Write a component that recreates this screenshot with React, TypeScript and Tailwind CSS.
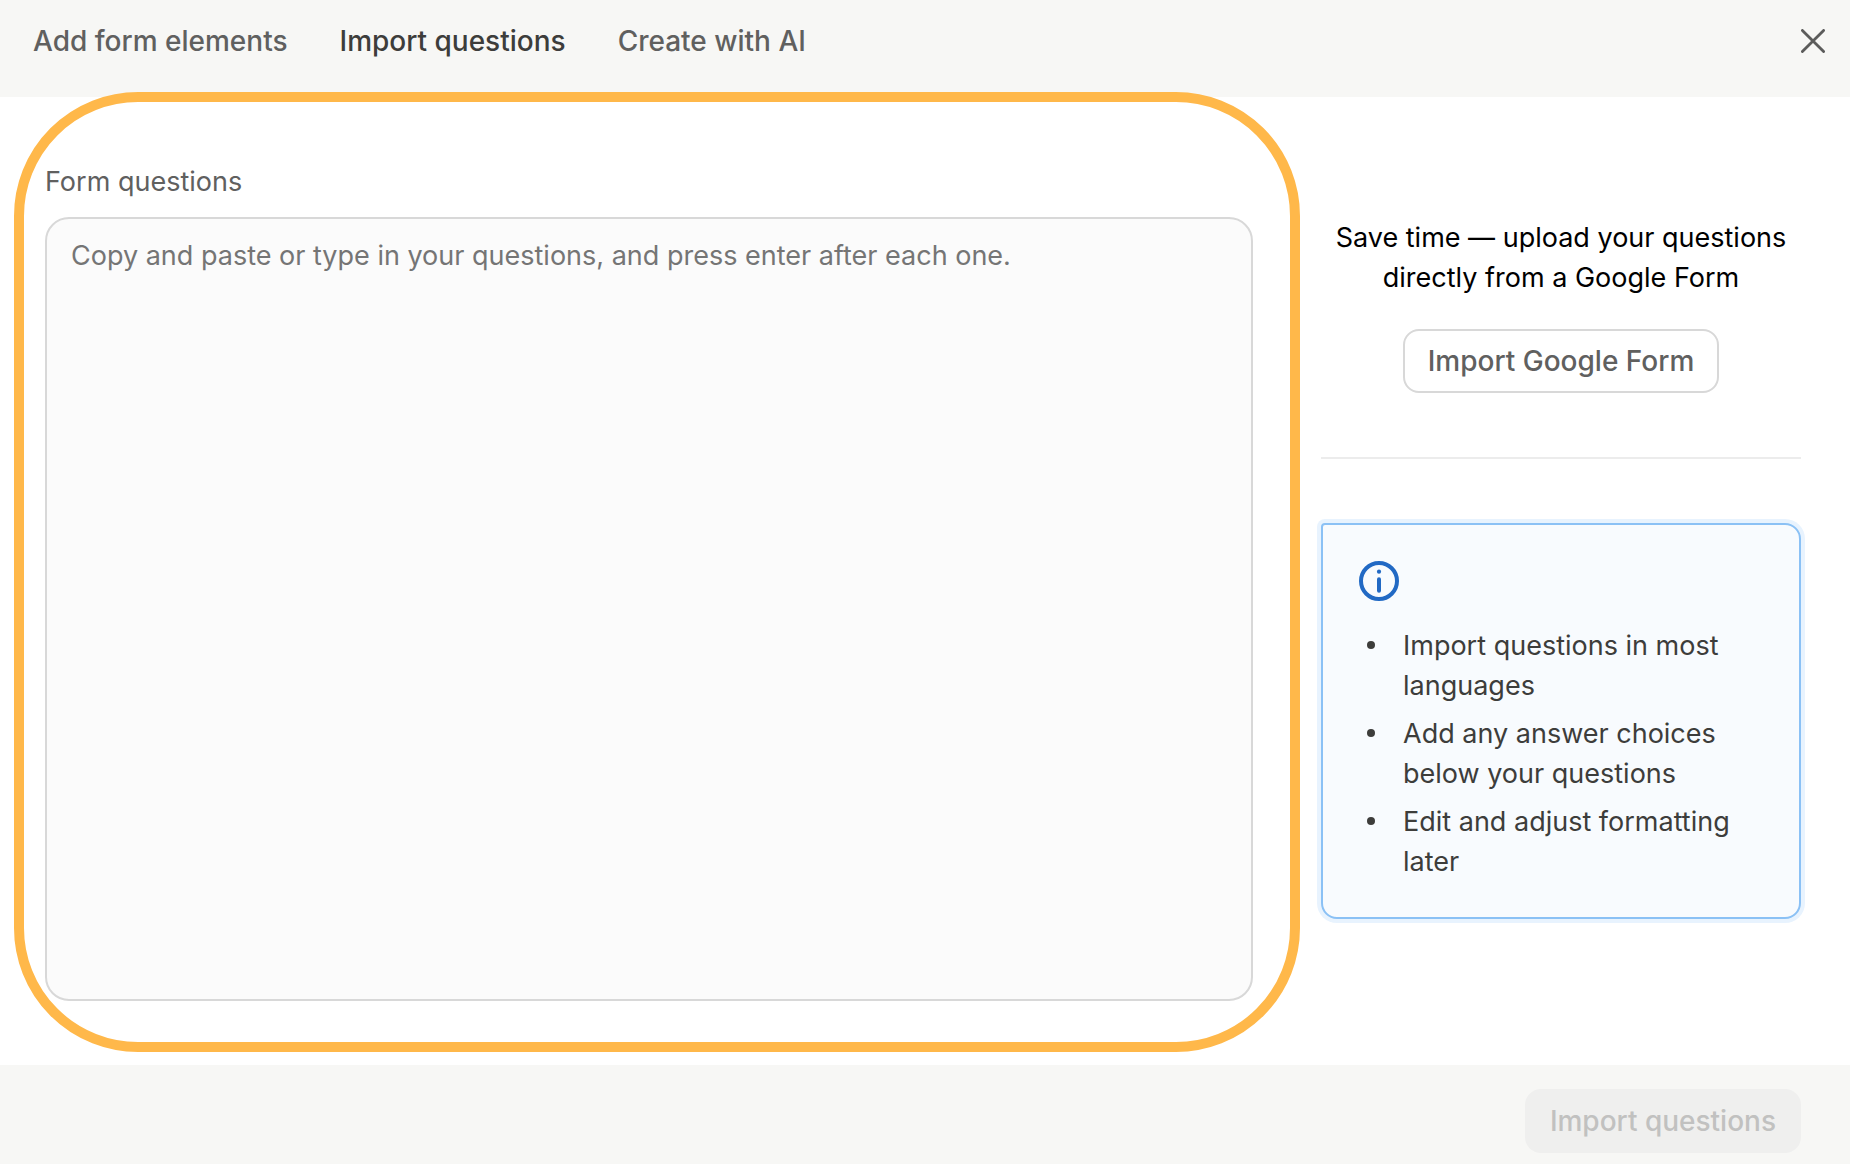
import { useState } from "react";

const tabs = ["Add form elements", "Import questions", "Create with AI"];

const tips = [
  "Import questions in most languages",
  "Add any answer choices below your questions",
  "Edit and adjust formatting later",
];

function CloseIcon() {
  return (
    <svg viewBox="0 0 24 24" className="size-6" fill="none" stroke="currentColor" strokeWidth="2.8" strokeLinecap="round" aria-hidden="true">
      <path d="M1.4 1.4 22.6 22.6M22.6 1.4 1.4 22.6" />
    </svg>
  );
}

function InfoIcon() {
  return (
    <svg viewBox="0 0 40 40" className="size-10 text-[#2169c4]" fill="none" aria-hidden="true">
      <circle cx="20" cy="20" r="18" stroke="currentColor" strokeWidth="4" />
      <circle cx="20" cy="10.7" r="2.1" fill="currentColor" />
      <path d="M20 18.2v11.6" stroke="currentColor" strokeWidth="4" strokeLinecap="round" />
    </svg>
  );
}

function Header({ active, onSelect }: { active: string; onSelect: (tab: string) => void }) {
  return (
    <header className="flex items-start justify-between bg-[#f7f7f5] pt-[21px] pr-[25px] pb-9 pl-[33px]">
      <nav className="flex gap-[52px] text-[28px] leading-10 font-medium">
        {tabs.map((tab) => (
          <button
            key={tab}
            type="button"
            aria-current={tab === active ? "page" : undefined}
            onClick={() => onSelect(tab)}
            className={tab === active ? "text-[#3d3d3b]" : "text-[#60605f]"}
          >
            {tab}
          </button>
        ))}
      </nav>
      <button type="button" aria-label="Close" className="flex h-10 items-center text-[#5c5c5b]">
        <CloseIcon />
      </button>
    </header>
  );
}

function QuestionsField() {
  return (
    <section className="relative flex min-w-0 flex-1 flex-col pt-[65px] pb-16">
      <div className="pointer-events-none absolute -top-[5px] -right-[47px] bottom-[13px] -left-[31px] rounded-[124px] border-[10px] border-[#ffb84a]" />
      <label htmlFor="questions" className="mb-[15px] text-[#60605f]">
        Form questions
      </label>
      <textarea
        id="questions"
        placeholder="Copy and paste or type in your questions, and press enter after each one."
        className="block w-full flex-1 resize-none rounded-3xl border-2 border-[#d8d8d8] bg-[#fbfbfb] px-6 py-[17px] text-[#3d3d3b] outline-none placeholder:text-[#757575] placeholder:opacity-100"
      />
    </section>
  );
}

function Sidebar() {
  return (
    <aside className="w-[480px] shrink-0 pt-[121px]">
      <div className="flex flex-col items-center border-b-2 border-[#ececec] pb-16 text-center">
        <p className="text-black">Save time — upload your questions directly from a Google Form</p>
        <button type="button" className="mt-[31px] h-16 rounded-2xl border-2 border-[#d8d8d8] px-[23px] text-[28px] leading-10 font-medium text-[#60605f]">
          Import Google Form
        </button>
      </div>
      <div className="mt-16 rounded-2xl rounded-tl-sm border-2 border-[#8bc1f5] bg-[#f8fbfe] px-9 pt-9 pb-[35px] ring-4 ring-[#e8f3fe]">
        <InfoIcon />
        <ul className="mt-[25px] flex flex-col gap-2 text-[#3d3d3b]">
          {tips.map((tip) => (
            <li key={tip} className="flex">
              <span className="mt-[15px] mr-7 ml-2 size-2 shrink-0 rounded-full bg-current" />
              <span>{tip}</span>
            </li>
          ))}
        </ul>
      </div>
    </aside>
  );
}

export default function App() {
  const [active, setActive] = useState("Import questions");
  return (
    <div className="flex min-h-screen flex-col bg-white font-['Inter',sans-serif] text-[27px] leading-10">
      <Header active={active} onSelect={setActive} />
      <main className="flex flex-1 gap-[68px] pr-[49px] pl-[45px]">
        <QuestionsField />
        <Sidebar />
      </main>
      <footer className="flex justify-end bg-[#f7f7f5] pt-6 pr-[49px] pb-[11px]">
        <button type="button" disabled className="h-16 rounded-2xl bg-[#efefee] px-[25px] text-[28px] leading-10 font-medium text-[#c1c1c0]">
          Import questions
        </button>
      </footer>
    </div>
  );
}
